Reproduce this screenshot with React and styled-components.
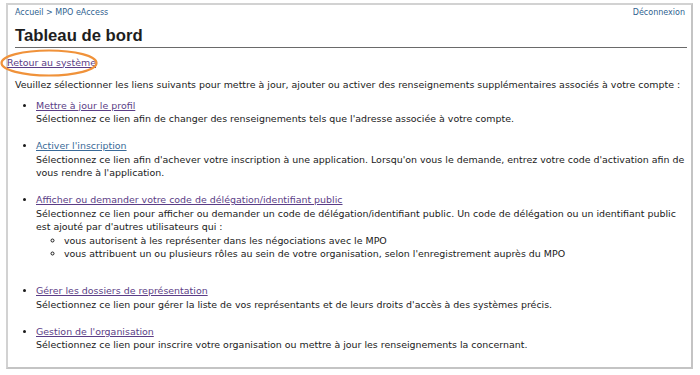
import React from 'react';
import styled, { createGlobalStyle } from 'styled-components';

const GlobalStyle = createGlobalStyle`
  body {
    margin: 0;
    background: #ffffff;
    font-family: "DejaVu Sans", Verdana, sans-serif;
  }
`;

const Frame = styled.div`
  position: relative;
  box-sizing: border-box;
  margin: 3px 0 0 6px;
  width: 687px;
  height: 366px;
  border: 2px solid #d2d2d2;
  border-right-color: #c4c4c4;
  border-bottom-color: #c4c4c4;
  background: #ffffff;
`;

const TopBar = styled.div`
  display: flex;
  justify-content: space-between;
  align-items: center;
  padding: 1px 6px 0 7px;
  height: 12px;
  font-size: 8px;
  color: #2f5f8f;
`;

const Title = styled.h1`
  margin: 7.5px 4px 0 7px;
  padding-bottom: 1px;
  border-bottom: 1px solid #6a6a6a;
  font-family: "Liberation Sans", Arial, sans-serif;
  font-size: 16.7px;
  line-height: 20px;
  font-weight: bold;
  color: #1e1e1e;
`;

const Content = styled.div`
  font-size: 9.45px;
  line-height: 13.5px;
  color: #1a1a1a;
`;

const BackRow = styled.div`
  position: relative;
  margin: 8px 0 0 -1px;
  height: 13.5px;
`;

const Ring = styled.svg`
  position: absolute;
  left: -7px;
  top: -7px;
  pointer-events: none;
`;

const Link = styled.a`
  color: ${p => (p.$fresh ? '#3a6a98' : '#5b3d86')};
  text-decoration: underline;
  cursor: pointer;
`;

const Intro = styled.p`
  margin: 8.5px 0 0 7px;
`;

const List = styled.ul`
  margin: 7.5px 2px 0 7px;
  padding-left: 21px;
  list-style: disc;
`;

const Item = styled.li`
  margin-bottom: ${p => p.$gap || 13.5}px;
`;

const SubList = styled.ul`
  margin: 0;
  padding-left: 28px;
  list-style: circle;
`;

const items = [
  {
    label: 'Mettre à jour le profil',
    text: "Sélectionnez ce lien afin de changer des renseignements tels que l'adresse associée à votre compte.",
  },
  {
    label: "Activer l'inscription",
    fresh: true,
    text: "Sélectionnez ce lien afin d'achever votre inscription à une application. Lorsqu'on vous le demande, entrez votre code d'activation afin de vous rendre à l'application.",
  },
  {
    label: 'Afficher ou demander votre code de délégation/identifiant public',
    text: "Sélectionnez ce lien pour afficher ou demander un code de délégation/identifiant public. Un code de délégation ou un identifiant public est ajouté par d'autres utilisateurs qui :",
    sub: [
      'vous autorisent à les représenter dans les négociations avec le MPO',
      "vous attribuent un ou plusieurs rôles au sein de votre organisation, selon l'enregistrement auprès du MPO",
    ],
    gap: 23.5,
  },
  {
    label: 'Gérer les dossiers de représentation',
    text: "Sélectionnez ce lien pour gérer la liste de vos représentants et de leurs droits d'accès à des systèmes précis.",
  },
  {
    label: "Gestion de l'organisation",
    text: 'Sélectionnez ce lien pour inscrire votre organisation ou mettre à jour les renseignements la concernant.',
  },
];

export default function App() {
  return (
    <>
      <GlobalStyle />
      <Frame>
        <TopBar>
          <span>Accueil &gt; MPO eAccess</span>
          <span>Déconnexion</span>
        </TopBar>
        <Title>Tableau de bord</Title>
        <Content>
          <BackRow>
            <Ring width="100" height="28" viewBox="0 0 100 28">
              <ellipse cx="49" cy="14" rx="47.5" ry="12.5" fill="none" stroke="#f0923a" strokeWidth="2.2" />
            </Ring>
            <Link>Retour au système</Link>
          </BackRow>
          <Intro>
            Veuillez sélectionner les liens suivants pour mettre à jour, ajouter ou activer des renseignements supplémentaires associés à votre compte :
          </Intro>
          <List>
            {items.map(item => (
              <Item key={item.label} $gap={item.gap}>
                <Link $fresh={item.fresh}>{item.label}</Link>
                <br />
                {item.text}
                {item.sub && (
                  <SubList>
                    {item.sub.map(s => (
                      <li key={s}>{s}</li>
                    ))}
                  </SubList>
                )}
              </Item>
            ))}
          </List>
        </Content>
      </Frame>
    </>
  );
}
